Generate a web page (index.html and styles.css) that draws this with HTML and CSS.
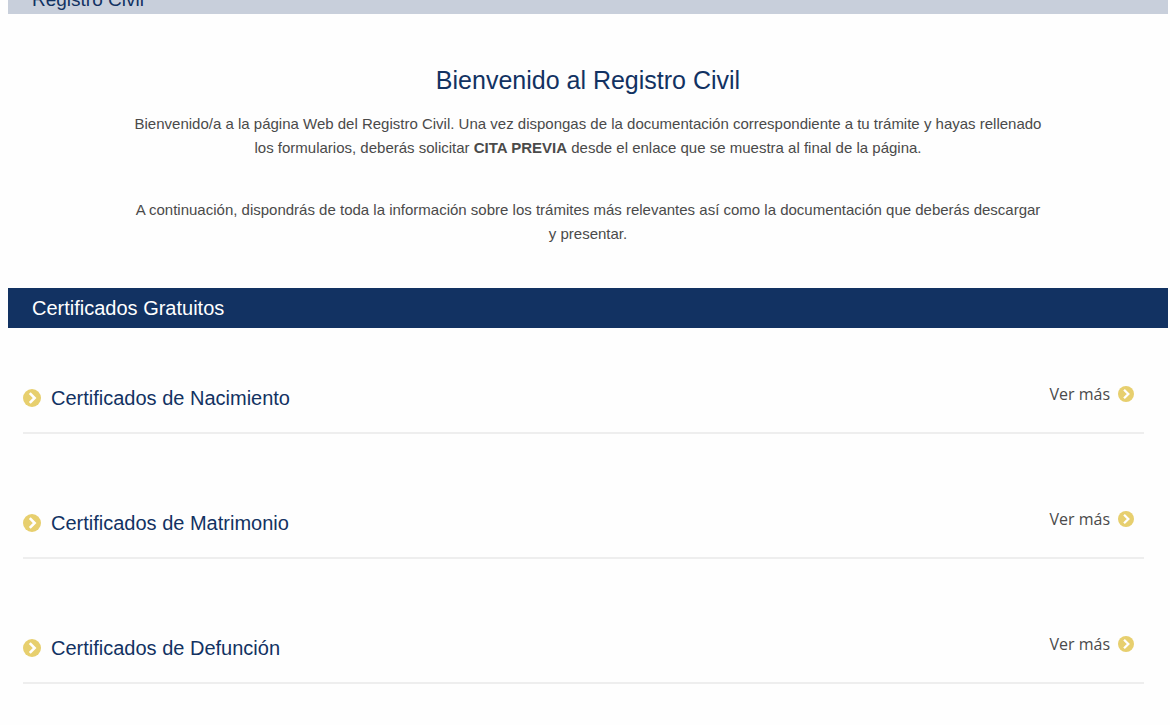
FILE: index.html
```html
<!DOCTYPE html>
<html lang="es">
<head>
	<meta charset="UTF-8">
	<title>Registro Civil</title>
	<link rel="stylesheet" href="styles.css">
</head>
<body>
	<svg class="sprite" width="0" height="0" aria-hidden="true">
		<symbol id="flecha" viewBox="0 0 18 18">
			<circle cx="9" cy="9" r="9" fill="#e7cf6e"/>
			<path d="M6.8 4.2 11.6 9l-4.8 4.8" fill="none" stroke="#fff" stroke-width="2.6"/>
		</symbol>
	</svg>

	<header class="cabecera">
		<div class="barra barra-clara">Registro Civil</div>
	</header>

	<main class="contenido">
		<section class="intro">
			<h1>Bienvenido al Registro Civil</h1>
			<p>Bienvenido/a a la página Web del Registro Civil. Una vez dispongas de la documentación correspondiente a tu trámite y hayas rellenado los formularios, deberás solicitar <strong>CITA PREVIA</strong> desde el enlace que se muestra al final de la página.</p>
			<p>A continuación, dispondrás de toda la información sobre los trámites más relevantes así como la documentación que deberás descargar y presentar.</p>
		</section>

		<h2 class="barra">Certificados Gratuitos</h2>

		<ul class="lista">
			<li>
				<h3><svg class="icono"><use href="#flecha"/></svg>Certificados de Nacimiento</h3>
				<a class="ver-mas" href="#">Ver más<svg class="icono"><use href="#flecha"/></svg></a>
			</li>
			<li>
				<h3><svg class="icono"><use href="#flecha"/></svg>Certificados de Matrimonio</h3>
				<a class="ver-mas" href="#">Ver más<svg class="icono"><use href="#flecha"/></svg></a>
			</li>
			<li>
				<h3><svg class="icono"><use href="#flecha"/></svg>Certificados de Defunción</h3>
				<a class="ver-mas" href="#">Ver más<svg class="icono"><use href="#flecha"/></svg></a>
			</li>
		</ul>
	</main>
</body>
</html>
```
FILE: styles.css
```css
body{margin:0 2px 0 8px;background:#fefefe;color:#4a4a4a;font-family:"Liberation Sans",Arial,sans-serif;font-size:15px;line-height:24px;}
h1,h2,h3,p,ul{margin:0;padding:0;font-weight:normal;}
ul{list-style:none;}
.sprite{display:block;}

/* barras de sección */
.barra{padding:0 24px;background:#123262;color:#fff;font-size:20px;line-height:40px;}
.barra-clara{background:#c8cfdb;color:#123262;font-size:19px;line-height:28px;}
.cabecera{display:flex;flex-direction:column;justify-content:flex-end;height:14px;overflow:hidden;}

.intro{padding:50px 125px 42px;text-align:center;}
.intro h1{margin-bottom:16px;color:#123262;font-size:25px;line-height:32px;}
.intro p + p{margin-top:38px;}

/* listado de certificados */
.lista{padding:0 24px 0 15px;}
.lista li{display:flex;justify-content:space-between;height:123px;border-bottom:2px solid #eee;}
.lista li:first-child{height:104px;}
.lista h3{display:flex;align-items:center;align-self:flex-end;gap:10px;margin-bottom:22px;color:#123262;font-size:20px;line-height:24px;}
.icono{flex:none;width:18px;height:18px;}
.ver-mas{display:flex;align-items:center;align-self:flex-end;gap:8px;margin:0 10px 26px 0;color:#4a4a4a;font-family:"Open Sans","Noto Sans",sans-serif;font-size:16px;line-height:24px;text-decoration:none;}
.ver-mas .icono{width:16px;height:16px;}
```
